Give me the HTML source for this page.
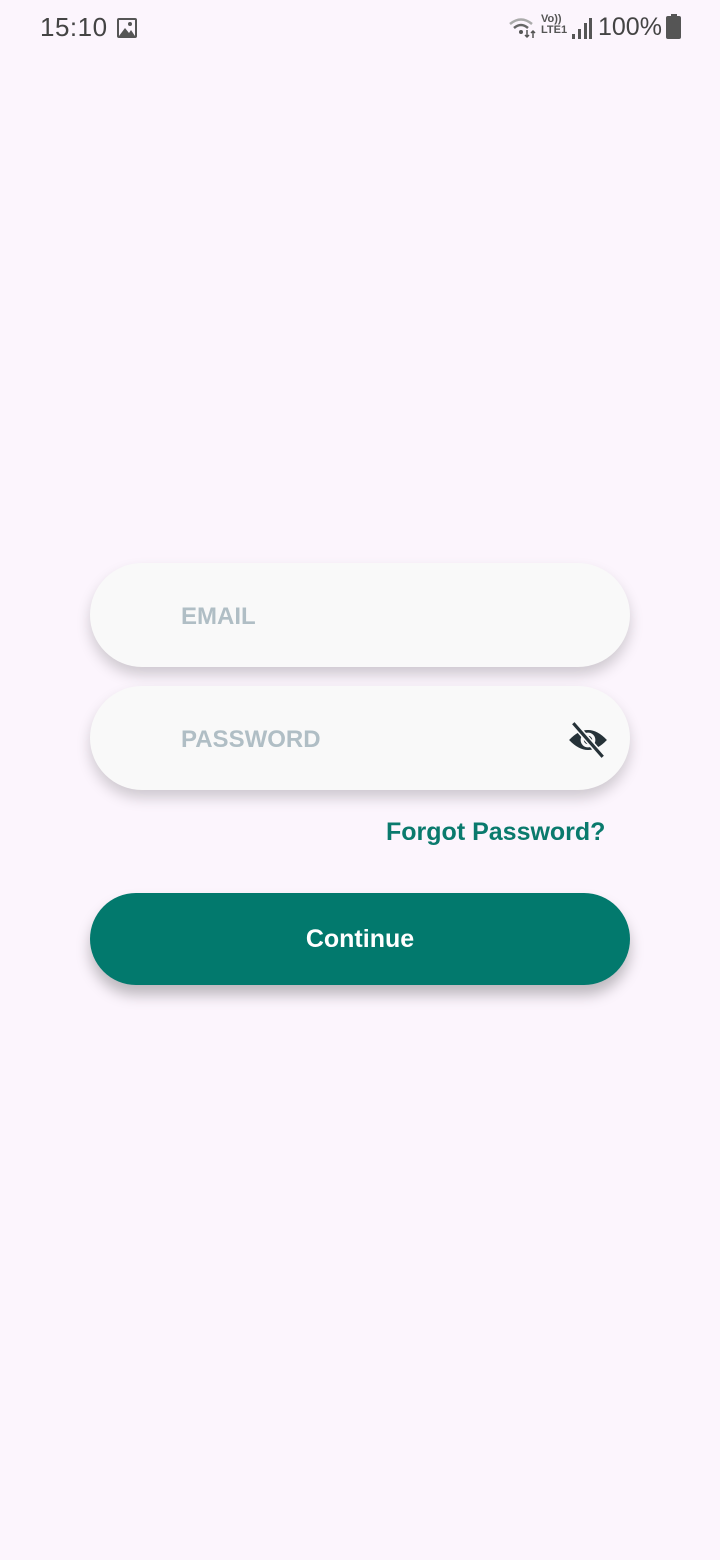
<!DOCTYPE html>
<html><head><meta charset="utf-8"><style>
html,body{margin:0;padding:0}
body{width:720px;height:1560px;background:#fcf5fd;font-family:"Liberation Sans",sans-serif;position:relative;overflow:hidden}
.t{position:absolute;left:40px;top:12px;font-size:26px;color:#444;letter-spacing:0.5px}
.field{position:absolute;left:90px;width:540px;height:104px;border-radius:52px;background:#f9f9f9;box-shadow:0 8px 14px rgba(0,0,0,0.18)}
.field span{position:absolute;left:91px;top:0;line-height:108px;font-size:24px;font-weight:bold;color:#b0bec5}
.btn{position:absolute;left:90px;top:893px;width:540px;height:92px;border-radius:46px;background:#02796d;box-shadow:0 10px 14px rgba(0,0,0,0.25);color:#fff;font-size:25px;font-weight:bold;text-align:center;line-height:92px}
.fp{position:absolute;left:386px;top:818px;font-size:25px;font-weight:bold;color:#0a7a6d}
</style></head><body>
<div class="t">15:10</div>
<svg style="position:absolute;left:116px;top:17px" width="22" height="22" viewBox="0 0 22 22"><rect x="1" y="1" width="20" height="20" rx="2" fill="#555"/><rect x="3" y="3" width="16" height="16" fill="#fcf5fd"/><path d="M3 19 L9 11 L13 16 L15 13 L19 19Z" fill="#555"/><circle cx="14" cy="7" r="2" fill="#555"/></svg>
<svg style="position:absolute;left:508px;top:16px" width="30" height="24" viewBox="0 0 30 24"><path d="M2 8 Q13 -1 24 8" stroke="#aaa" stroke-width="2.5" fill="none"/><path d="M6 12 Q13 6 20 12" stroke="#666" stroke-width="2.5" fill="none"/><circle cx="13" cy="16" r="2" fill="#555"/><path d="M19 14v7M17 19l2 2 2-2M25 22v-7M23 17l2-2 2 2" stroke="#555" stroke-width="1.5" fill="none"/></svg>
<div style="position:absolute;left:541px;top:14px;font-size:11px;color:#555;font-weight:bold;line-height:11px">Vo))<br>LTE1</div>
<svg style="position:absolute;left:570px;top:16px" width="22" height="24"><rect x="2" y="18" width="3" height="5" fill="#555"/><rect x="8" y="13" width="3" height="10" fill="#555"/><rect x="14" y="7" width="3" height="16" fill="#555"/><rect x="19" y="2" width="3" height="21" fill="#555"/></svg>
<div style="position:absolute;left:598px;top:13px;font-size:25px;color:#444">100%</div>
<div style="position:absolute;left:666px;top:16px;width:15px;height:23px;background:#555;border-radius:2px"></div>
<div style="position:absolute;left:671px;top:14px;width:6px;height:3px;background:#555"></div>
<div class="field" style="top:563px"><span>EMAIL</span></div>
<div class="field" style="top:686px"><span>PASSWORD</span>
<svg style="position:absolute;left:477px;top:34px" width="42" height="40" viewBox="0 0 40 38"><path d="M2 19 Q20 0 38 19 Q20 38 2 19Z" fill="#263238"/><circle cx="20" cy="19" r="7" fill="#f9f9f9"/><circle cx="20" cy="19" r="4" fill="#263238"/><path d="M6 3 L34 35" stroke="#f9f9f9" stroke-width="6"/><path d="M6 3 L34 35" stroke="#263238" stroke-width="3"/></svg></div>
<div class="fp">Forgot Password?</div>
<div class="btn">Continue</div>
</body></html>
